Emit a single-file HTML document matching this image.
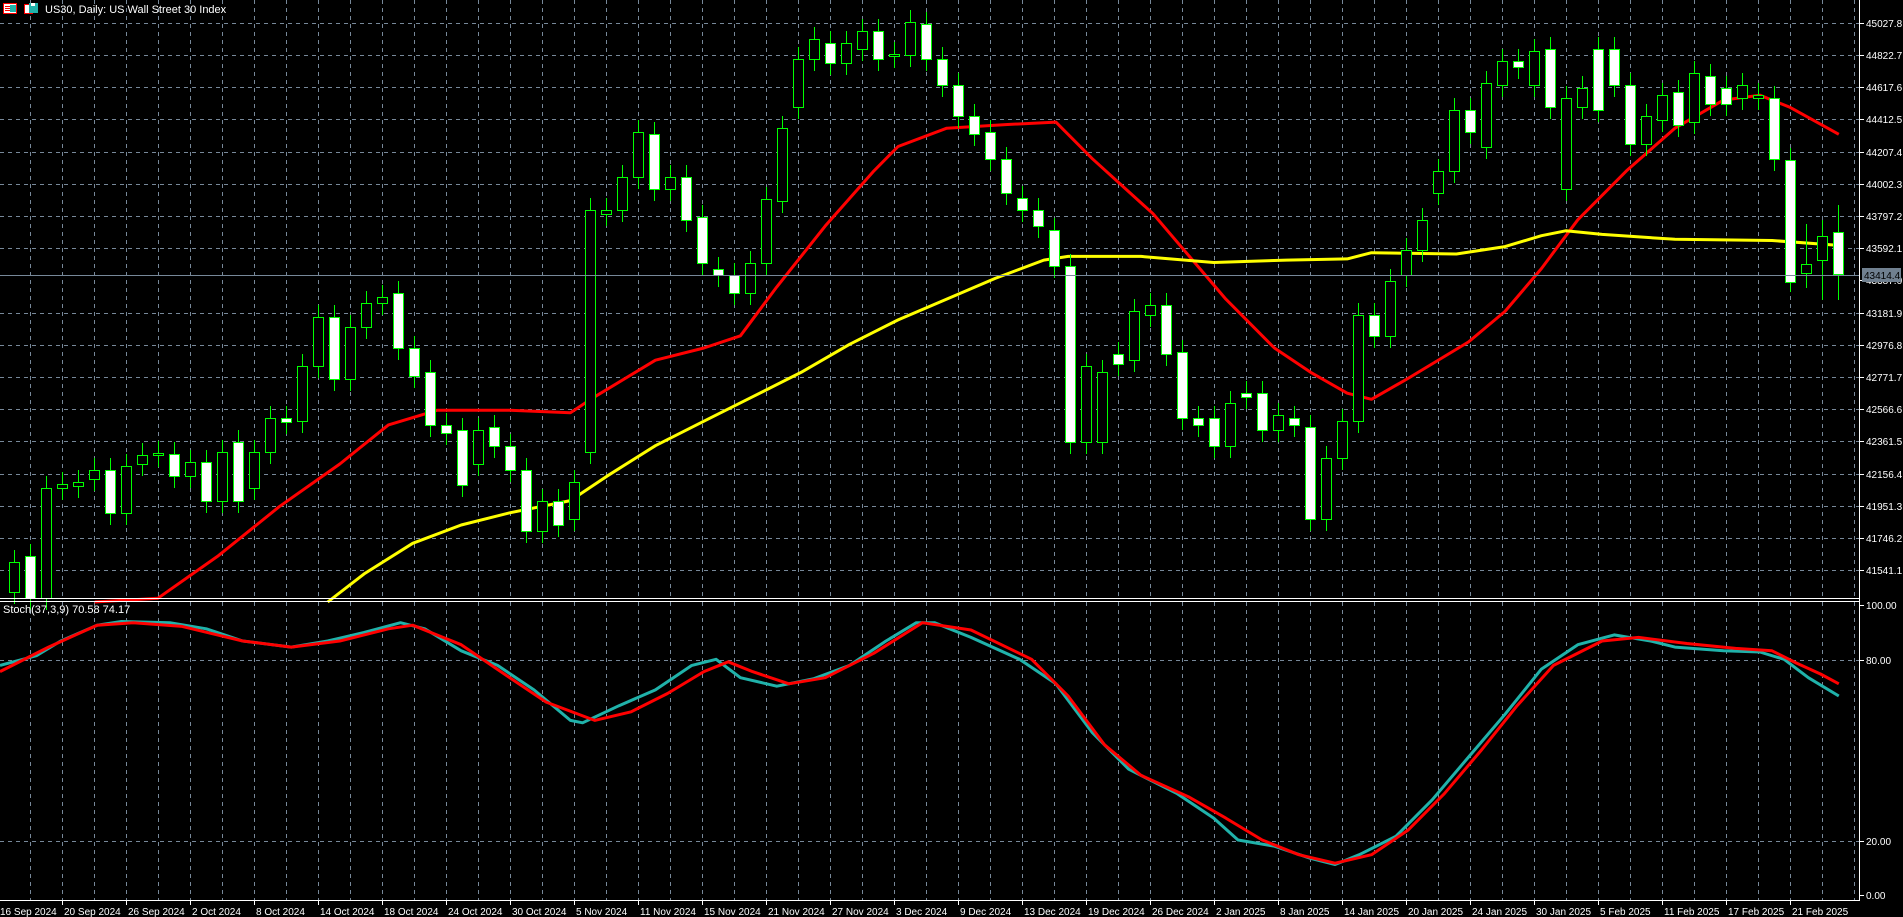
<!DOCTYPE html>
<html><head><meta charset="utf-8"><style>
html,body{margin:0;padding:0;background:#000;width:1903px;height:917px;overflow:hidden}
svg{display:block}
text{font-family:"Liberation Sans",sans-serif;font-size:10px;fill:#fff}
</style></head><body>
<svg id="s" width="1903" height="917" viewBox="0 0 1903 917" xmlns="http://www.w3.org/2000/svg">
<g id="grid" stroke="#778899" stroke-width="1" stroke-dasharray="4,4"></g>
<g id="lines"></g>
<g id="candles"></g>
<line x1="0" y1="275.5" x2="1859" y2="275.5" stroke="#778899" stroke-width="1"/>
<line x1="0" y1="598.5" x2="1859" y2="598.5" stroke="#fff"/>
<line x1="0" y1="601.5" x2="1859" y2="601.5" stroke="#fff"/>
<line x1="1859.5" y1="0" x2="1859.5" y2="901" stroke="#fff"/>
<line x1="0" y1="900.5" x2="1860" y2="900.5" stroke="#fff"/>
<g id="axis"></g>
<rect x="1862" y="268" width="39" height="14" fill="#708090"/>
<text x="1864" y="279" style="fill:#000">43414.4</text>
<g>
<rect x="3.5" y="3.5" width="13" height="10" fill="#fff" stroke="#f00"/>
<rect x="10" y="5" width="6" height="7" fill="#20b2aa"/>
<line x1="5" y1="6.5" x2="10" y2="6.5" stroke="#f00"/><line x1="5" y1="8.5" x2="10" y2="8.5" stroke="#f00"/><line x1="5" y1="10.5" x2="10" y2="10.5" stroke="#f00"/>
<rect x="24.5" y="4.5" width="8" height="9" fill="#fff" stroke="#f00"/>
<rect x="29" y="3" width="9" height="10" fill="#20b2aa"/>
<rect x="31" y="3" width="4" height="3" fill="#fff"/>
</g>
<text x="45" y="13" style="font-size:11px">US30, Daily:  US Wall Street 30 Index</text>
<text x="3" y="613" style="font-size:11px">Stoch(37,3,9) 70.58 74.17</text>
</svg>
<script>
var NS="http://www.w3.org/2000/svg";
function el(p,t,a){var e=document.createElementNS(NS,t);for(var k in a)e.setAttribute(k,a[k]);p.appendChild(e);return e;}
var G=document.getElementById('grid'),A=document.getElementById('axis'),L=document.getElementById('lines'),C=document.getElementById('candles');
for(var x=30;x<1859;x+=32){el(G,'line',{x1:x+.5,y1:0,x2:x+.5,y2:598});el(G,'line',{x1:x+.5,y1:602,x2:x+.5,y2:900});}
var p=45027.8;
for(var i=0;i<18;i++){var y=Math.round(22.7+i*32.2);
 if(i!==8){el(G,'line',{x1:0,y1:y+.5,x2:1859,y2:y+.5});}
 el(A,'line',{x1:1859,y1:y+.5,x2:1864,y2:y+.5,stroke:'#fff'});
 var t=el(A,'text',{x:1866,y:y+4});t.textContent=(p-205.1*i).toFixed(1);}
[[605,'100.00'],[660,'80.00'],[841,'20.00'],[895,'0.00']].forEach(function(v,i){
 if(i==1||i==2)el(G,'line',{x1:0,y1:v[0]+.5,x2:1859,y2:v[0]+.5});
 el(A,'line',{x1:1859,y1:v[0]+.5,x2:1864,y2:v[0]+.5,stroke:'#fff'});
 var t=el(A,'text',{x:1866,y:v[0]+4});t.textContent=v[1];});
var d=["16 Sep 2024","20 Sep 2024","26 Sep 2024","2 Oct 2024","8 Oct 2024","14 Oct 2024","18 Oct 2024","24 Oct 2024","30 Oct 2024","5 Nov 2024","11 Nov 2024","15 Nov 2024","21 Nov 2024","27 Nov 2024","3 Dec 2024","9 Dec 2024","13 Dec 2024","19 Dec 2024","26 Dec 2024","2 Jan 2025","8 Jan 2025","14 Jan 2025","20 Jan 2025","24 Jan 2025","30 Jan 2025","5 Feb 2025","11 Feb 2025","17 Feb 2025","21 Feb 2025"];
d.forEach(function(s,k){var x=-2+64*k;if(k>0)el(A,'line',{x1:x+.5,y1:900,x2:x+.5,y2:905,stroke:'#fff'});var t=el(A,'text',{x:Math.max(0,x+2),y:915});t.textContent=s;});
var sx=1.2137,sy=1.221;
var c=[[460,485,1],[455,490,0],[400,490,1],[396,400,1],[395,398,1],[385,392,1],[385,420,0],[382,420,1],[373,380,1],[371,373,1],[372,390,0],[378,390,1],[378,410,0],[370,410,1],[362,410,0],[370,400,1],[342,370,1],[342,346,0],[300,345,1],[260,300,1],[260,310,0],[268,310,1],[248,268,1],[243,248,1],[240,285,0],[285,308,0],[305,348,0],[348,355,0],[352,397,0],[352,380,1],[350,365,0],[365,385,0],[385,435,0],[410,435,1],[410,430,0],[395,425,1],[172,370,1],[172,175,1],[145,172,1],[108,145,1],[110,155,0],[145,155,1],[145,180,0],[178,215,0],[220,225,0],[225,240,0],[215,240,1],[163,215,1],[105,165,1],[48,88,1],[32,48,1],[35,52,0],[35,52,1],[25,40,1],[25,48,0],[44,46,1],[18,45,1],[20,48,0],[48,70,0],[70,95,0],[95,110,0],[108,130,0],[130,158,0],[162,172,0],[172,185,0],[188,218,0],[218,362,0],[300,362,1],[305,362,1],[290,298,0],[255,295,1],[250,258,1],[250,290,0],[288,342,0],[342,348,0],[342,365,0],[330,365,1],[322,325,0],[322,352,0],[340,352,1],[342,348,0],[350,425,0],[375,425,1],[345,375,1],[258,345,1],[258,275,0],[230,275,1],[205,225,1],[180,205,1],[140,158,1],[90,140,1],[90,108,0],[68,120,1],[50,70,1],[50,55,0],[42,70,1],[40,88,0],[80,155,1],[72,88,1],[40,90,0],[40,70,0],[70,118,0],[95,118,1],[78,98,1],[75,102,0],[60,100,1],[62,85,0],[72,85,0],[70,80,1],[78,80,1],[80,130,0]];
var n=c.length;
function draw(x,top,bot,bull,wt,wb){
 el(C,'line',{x1:x+.5,y1:wt,x2:x+.5,y2:wb,stroke:'#00ff00','stroke-width':1});
 el(C,'rect',{x:x-4.5,y:top+.5,width:10,height:Math.max(1,bot-top),fill:bull?'#000':'#fff',stroke:'#00ff00','stroke-width':1});
}
for(var i=0;i<n;i++){var x=14+16*i,t=Math.round(c[i][0]*sy),b=Math.round(c[i][1]*sy);draw(x,t,b,c[i][2],t-12,b+12);}
var last=[[160,282,0,148,292],[264,273,1,224,288],[236,260,1,220,300],[232,274,0,205,300]];
last.forEach(function(v,k){draw(14+16*(111+k),v[0],v[1],v[2],v[3],v[4]);});
function poly(pts,col){var s=pts.map(function(q){return (q[0]*sx).toFixed(1)+','+(q[1]*sy).toFixed(1)}).join(' ');
 el(L,'polyline',{points:s,fill:'none',stroke:col,'stroke-width':3,'stroke-linejoin':'round'});}
poly([[78,493],[130,490],[180,455],[230,415],[280,380],[320,348],[360,336],[420,336],[470,338],[490,325],[540,295],[580,285],[610,275],[640,235],[680,185],[720,140],[740,120],[780,105],[830,102],[870,100],[900,130],[950,175],[980,210],[1010,245],[1050,285],[1080,305],[1110,322],[1130,327],[1160,310],[1210,280],[1240,255],[1270,220],[1300,180],[1340,140],[1380,105],[1420,82],[1450,78],[1475,88],[1515,110]],'#ff0000');
poly([[270,493],[300,470],[340,445],[380,430],[420,420],[470,410],[500,390],[540,365],[580,345],[620,325],[660,305],[700,282],[740,262],[780,245],[820,228],[860,213],[880,210],[940,210],[1000,215],[1060,213],[1110,212],[1130,207],[1200,208],[1240,202],[1270,193],[1290,189],[1320,192],[1380,196],[1460,197],[1515,201]],'#ffff00');
poly([[0,545],[30,537],[50,525],[80,512],[100,509],[140,510],[170,515],[200,525],[240,530],[270,525],[300,518],[330,510],[350,515],[380,533],[410,545],[440,565],[470,590],[480,592],[510,578],[540,565],[570,545],[590,540],[610,555],[640,562],[670,556],[700,545],[730,525],[755,510],[770,510],[800,522],[840,540],[870,560],[900,600],[930,630],[970,650],[1000,670],[1020,688],[1050,693],[1080,703],[1100,708],[1120,700],[1150,685],[1180,655],[1210,620],[1240,585],[1270,548],[1300,528],[1330,520],[1360,525],[1380,530],[1420,533],[1450,534],[1470,540],[1490,555],[1515,570]],'#20b2aa');
poly([[0,550],[40,530],[80,512],[110,510],[150,513],[200,525],[240,530],[280,525],[320,515],[340,512],[380,528],[420,555],[450,575],[490,590],[520,583],[550,568],[580,550],[600,542],[620,550],[650,560],[680,555],[720,535],[760,510],[800,516],[850,540],[880,570],[910,610],[940,635],[980,653],[1010,670],[1040,688],[1070,700],[1100,707],[1130,700],[1160,680],[1190,650],[1220,615],[1250,578],[1280,545],[1320,525],[1350,522],[1390,527],[1430,531],[1460,533],[1480,543],[1500,552],[1515,560]],'#ff0000');
</script>
</body></html>
